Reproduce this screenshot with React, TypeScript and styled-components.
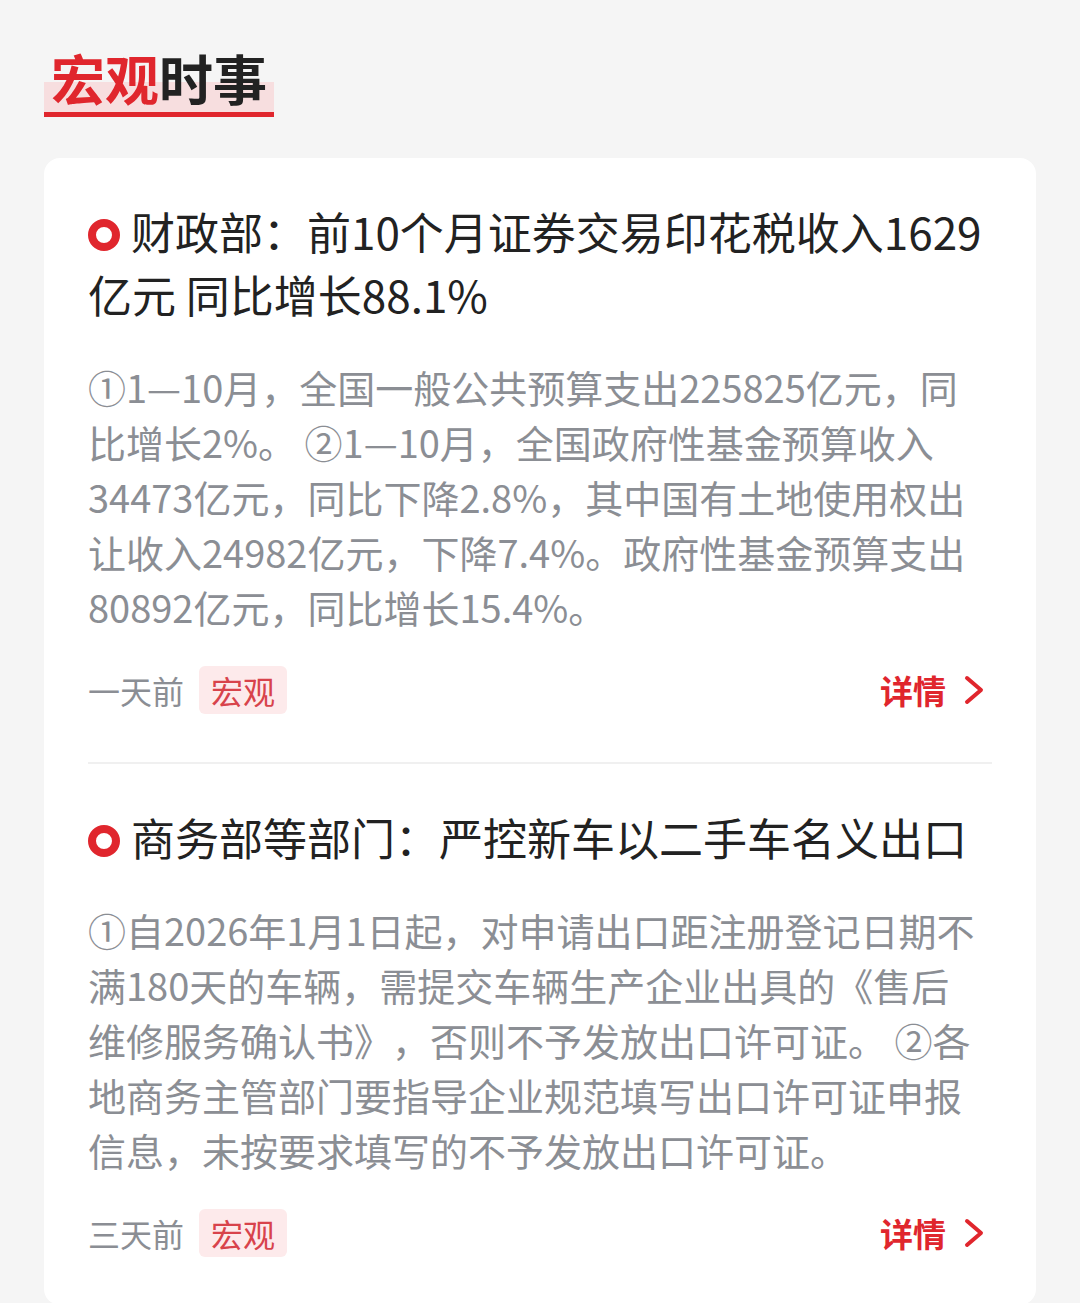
import React from "react";
import styled, { createGlobalStyle } from "styled-components";

const GlobalStyle = createGlobalStyle`
  html, body {
    margin: 0;
    padding: 0;
    background: #f5f5f5;
  }
  body {
    font-family: "Noto Sans CJK SC", "Noto Sans", sans-serif;
    -webkit-font-smoothing: antialiased;
    text-spacing-trim: space-all;
  }
`;

const Page = styled.div`
  padding: 44px 44px 0;
  display: flex;
  flex-direction: column;
  gap: 41px;
`;

const Heading = styled.h1`
  align-self: flex-start;
  margin: 0;
  padding: 0 7px 0 7px;
  font-size: 54px;
  line-height: 68px;
  font-weight: 700;
  color: #222;
  background: linear-gradient(to bottom, transparent 0, transparent 38px, #f7dedf 38px);
  border-bottom: 5px solid #e0262d;
`;

const Accent = styled.span`
  color: #e0262d;
`;

const Card = styled.div`
  background: #fff;
  border-radius: 16px;
  padding: 0 44px;
`;

const Item = styled.article`
  padding: 42px 0 48px;
  & + & {
    border-top: 2px solid #f0f0f0;
  }
`;

const Title = styled.h2`
  margin: 0;
  font-size: 44px;
  line-height: 63px;
  font-weight: 400;
  color: #222;
`;

const Ring = styled.span`
  display: inline-block;
  box-sizing: border-box;
  width: 32px;
  height: 32px;
  border: 8px solid #e0262d;
  border-radius: 50%;
  margin-right: 11px;
  vertical-align: -1px;
`;

const Body = styled.p`
  margin: 33px 0 0;
  padding-right: 8px;
  font-size: 38px;
  line-height: 55px;
  color: #8b8e94;
`;

const Footer = styled.div`
  margin-top: 32px;
  display: flex;
  align-items: center;
  justify-content: space-between;
  height: 48px;
`;

const Meta = styled.div`
  display: flex;
  align-items: center;
  gap: 15px;
`;

const Time = styled.span`
  font-size: 32px;
  color: #8b8e94;
`;

const Tag = styled.span`
  display: inline-flex;
  align-items: center;
  height: 48px;
  padding: 0 12px;
  border-radius: 6px;
  background: #fdeaeb;
  color: #d8434b;
  font-size: 32px;
`;

const More = styled.a`
  display: flex;
  align-items: center;
  gap: 18px;
  padding-right: 8px;
  color: #e0262d;
  font-size: 33px;
  font-weight: 700;
  text-decoration: none;
`;

const Chevron = () => (
  <svg width="20" height="30" viewBox="0 0 20 30" fill="none">
    <polyline
      points="3,3 17,15 3,27"
      stroke="#e0262d"
      strokeWidth="4"
      strokeLinecap="round"
      strokeLinejoin="round"
    />
  </svg>
);

type News = { title: string; body: string; time: string; tag: string };

const news: News[] = [
  {
    title: "财政部：前10个月证券交易印花税收入1629亿元 同比增长88.1%",
    body:
      "①1—10月，全国一般公共预算支出225825亿元，同比增长2%。 ②1—10月，全国政府性基金预算收入34473亿元，同比下降2.8%，其中国有土地使用权出让收入24982亿元，下降7.4%。政府性基金预算支出80892亿元，同比增长15.4%。",
    time: "一天前",
    tag: "宏观",
  },
  {
    title: "商务部等部门：严控新车以二手车名义出口",
    body:
      "①自2026年1月1日起，对申请出口距注册登记日期不满180天的车辆，需提交车辆生产企业出具的《售后维修服务确认书》，否则不予发放出口许可证。 ②各地商务主管部门要指导企业规范填写出口许可证申报信息，未按要求填写的不予发放出口许可证。",
    time: "三天前",
    tag: "宏观",
  },
];

export default function App() {
  return (
    <>
      <GlobalStyle />
      <Page>
        <Heading>
          <Accent>宏观</Accent>时事
        </Heading>
        <Card>
          {news.map((n) => (
            <Item key={n.title}>
              <Title>
                <Ring />
                {n.title}
              </Title>
              <Body>{n.body}</Body>
              <Footer>
                <Meta>
                  <Time>{n.time}</Time>
                  <Tag>{n.tag}</Tag>
                </Meta>
                <More href="#">
                  详情
                  <Chevron />
                </More>
              </Footer>
            </Item>
          ))}
        </Card>
      </Page>
    </>
  );
}
